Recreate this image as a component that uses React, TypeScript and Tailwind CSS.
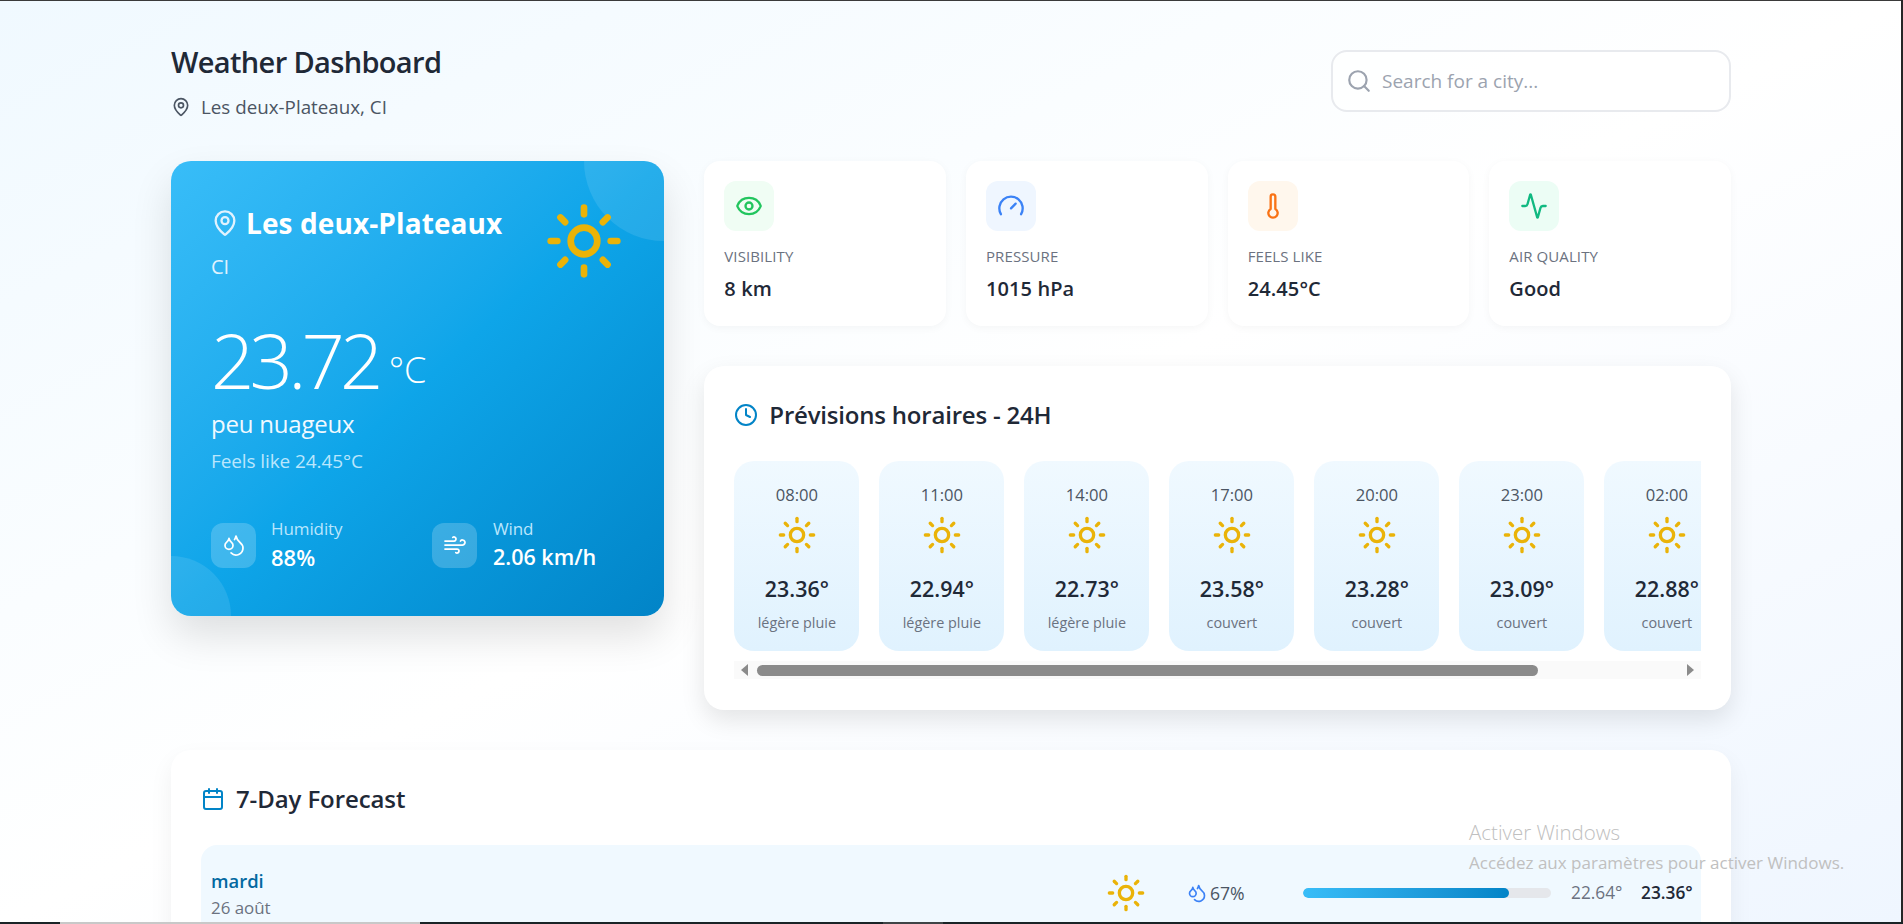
import { Sun, MapPin, Search, Eye, Gauge, Thermometer, Activity, Droplets, Wind, Clock, Calendar } from "lucide-react";

const stats = [
  { label: "Visibility", value: "8 km", Icon: Eye, box: "bg-[#f0fdf4]", color: "text-[#22c55e]" },
  { label: "Pressure", value: "1015 hPa", Icon: Gauge, box: "bg-[#eff6ff]", color: "text-[#3b82f6]" },
  { label: "Feels like", value: "24.45°C", Icon: Thermometer, box: "bg-[#fff7ed]", color: "text-[#f97316]" },
  { label: "Air quality", value: "Good", Icon: Activity, box: "bg-[#ecfdf5]", color: "text-[#10b981]" },
];

const hours = [
  { t: "08:00", v: "23.36°", d: "légère pluie" },
  { t: "11:00", v: "22.94°", d: "légère pluie" },
  { t: "14:00", v: "22.73°", d: "légère pluie" },
  { t: "17:00", v: "23.58°", d: "couvert" },
  { t: "20:00", v: "23.28°", d: "couvert" },
  { t: "23:00", v: "23.09°", d: "couvert" },
  { t: "02:00", v: "22.88°", d: "couvert" },
];

export default function App() {
  return (
    <div className="relative h-[924px] overflow-hidden bg-gradient-to-br from-[#f0f9ff] via-white to-[#eff6ff] font-['Open_Sans',sans-serif] text-[#1f2937]">
      <div className="ml-[171px] w-[1560px]">
        <header className="flex justify-between pt-[44px]">
          <div>
            <h1 className="text-[29px] leading-[36px] font-semibold tracking-[-0.65px]">Weather Dashboard</h1>
            <div className="mt-[15px] flex items-center gap-[10px] text-[18.8px] leading-6 text-[#4b5563]">
              <MapPin size={20} strokeWidth={2} />
              <span>Les deux-Plateaux, CI</span>
            </div>
          </div>
          <div className="mt-[6px] flex h-[62px] w-[400px] items-center gap-[10px] rounded-2xl border-2 border-[#e8eaee] bg-white/80 pl-[13px] text-[19px] text-[#9ca3af]">
            <Search size={26} strokeWidth={2} />
            <span>Search for a city...</span>
          </div>
        </header>

        <div className="mt-[42px] grid grid-cols-3 gap-x-10">
          <section className="relative h-[455px] overflow-hidden rounded-[20px] bg-gradient-to-br from-[#38bdf8] via-[#0ea5e9] to-[#0284c7] p-10 text-white shadow-[0_20px_40px_rgba(0,0,0,0.12)]">
            <div className="absolute -top-20 -right-20 size-40 rounded-full bg-white/10" />
            <div className="absolute -bottom-[60px] -left-[60px] size-[120px] rounded-full bg-white/10" />
            <div className="relative flex justify-between">
              <div>
                <div className="flex h-[44px] items-center gap-[7px]">
                  <MapPin size={28} strokeWidth={2} className="text-[#e0f2fe]" />
                  <span className="text-[28px] font-bold tracking-[0.1px]">Les deux-Plateaux</span>
                </div>
                <div className="mt-[10px] text-[20px] leading-6 text-[#e0f2fe]">CI</div>
              </div>
              <Sun size={80} strokeWidth={2} className="text-[#eab308]" />
            </div>
            <div className="relative mt-[34px] flex items-start">
              <span className="text-[76px] leading-[90px] font-light tracking-[-4.8px]">23.72</span>
              <span className="mt-[30px] ml-[10px] text-[36px] leading-[50px] font-light">°C</span>
            </div>
            <div className="relative mt-[3px] text-[24px] leading-8 tracking-[-0.2px] text-[#f0f9ff]">peu nuageux</div>
            <div className="relative mt-[9px] text-[19px] leading-6 tracking-[-0.1px] text-[#bae6fd]">Feels like 24.45°C</div>
            <div className="relative mt-[44px] grid grid-cols-[221px_1fr]">
              <div className="flex items-center gap-[15px]">
                <div className="flex size-[45px] items-center justify-center rounded-xl bg-white/20">
                  <Droplets size={24} strokeWidth={1.75} />
                </div>
                <div>
                  <div className="text-[17px] leading-[24px] tracking-[-0.1px] text-[#bae6fd]">Humidity</div>
                  <div className="text-[22px] leading-[32px] font-semibold">88%</div>
                </div>
              </div>
              <div className="flex items-center gap-[16px]">
                <div className="flex size-[45px] items-center justify-center rounded-xl bg-white/20">
                  <Wind size={24} strokeWidth={1.75} />
                </div>
                <div>
                  <div className="text-[17px] leading-[24px] tracking-[-0.1px] text-[#bae6fd]">Wind</div>
                  <div className="text-[21.5px] leading-[32px] font-semibold">2.06 km/h</div>
                </div>
              </div>
            </div>
          </section>

          <div className="col-span-2">
            <div className="grid grid-cols-4 gap-5">
              {stats.map(({ label, value, Icon, box, color }) => (
                <div key={label} className="h-[165px] rounded-2xl bg-white p-5 shadow-[0_2px_8px_rgba(0,0,0,0.04)]">
                  <div className={`flex size-[50px] items-center justify-center rounded-xl ${box} ${color}`}>
                    <Icon size={28} strokeWidth={2} />
                  </div>
                  <div className="mt-[15px] text-[15px] leading-5 tracking-[0.1px] text-[#6b7280] uppercase">{label}</div>
                  <div className="mt-[8px] text-[20px] leading-[30px] font-semibold tracking-[0.1px]">{value}</div>
                </div>
              ))}
            </div>

            <section className="mt-10 h-[344px] rounded-[20px] bg-white p-[30px] shadow-[0_10px_25px_rgba(0,0,0,0.1)]">
              <div className="flex h-[38px] items-center gap-[11px]">
                <Clock size={24} strokeWidth={2} className="text-[#0284c7]" />
                <h2 className="text-[24px] font-semibold tracking-[-0.2px]">Prévisions horaires - 24H</h2>
              </div>
              <div className="mt-[27px] flex gap-5 overflow-hidden">
                {hours.map((h) => (
                  <div key={h.t} className="flex h-[190px] w-[125px] shrink-0 flex-col items-center rounded-[20px] bg-gradient-to-b from-[#f0f9ff] to-[#e0f2fe] pt-[22px]">
                    <div className="text-[16.6px] leading-6 font-medium text-[#4b5563]">{h.t}</div>
                    <Sun size={40} strokeWidth={2} className="mt-[8px] text-[#eab308]" />
                    <div className="mt-[19px] text-[21.4px] leading-[30px] font-semibold">{h.v}</div>
                    <div className="mt-[9px] text-[14.4px] leading-5 text-[#6b7280]">{h.d}</div>
                  </div>
                ))}
              </div>
              <div className="mt-[10px] flex h-[18px] items-center bg-[#fafafa] pr-[7px] pl-[7px]">
                <span className="h-0 w-0 border-y-[6px] border-r-[7px] border-y-transparent border-r-[#8b8b8b]" />
                <span className="ml-[9px] h-[11px] w-[781px] rounded-full bg-[#8b8b8b]" />
                <span className="ml-auto h-0 w-0 border-y-[6px] border-l-[7px] border-y-transparent border-l-[#8b8b8b]" />
              </div>
            </section>
          </div>
        </div>

        <section className="mt-10 rounded-[20px] bg-white p-[30px] shadow-[0_10px_25px_rgba(0,0,0,0.06)]">
          <div className="flex h-[38px] items-center gap-[11px]">
            <Calendar size={24} strokeWidth={2} className="text-[#0284c7]" />
            <h2 className="text-[24px] font-semibold tracking-[-0.1px]">7-Day Forecast</h2>
          </div>
          <div className="mt-[27px] flex h-[96px] items-center rounded-2xl bg-[#f0f9ff] px-[10px]">
            <div className="flex-1 pt-[2px]">
              <div className="text-[18.4px] leading-6 font-semibold text-[#0369a1]">mardi</div>
              <div className="mt-[3px] text-[16.9px] leading-6 text-[#6b7280]">26 août</div>
            </div>
            <Sun size={40} strokeWidth={2} className="text-[#eab308]" />
            <div className="ml-[41px] flex w-[116px] items-center gap-[3px] text-[17.6px] text-[#4b5563]">
              <Droplets size={20} strokeWidth={2} className="text-[#3b82f6]" />
              <span>67%</span>
            </div>
            <div className="h-[10px] w-[248px] overflow-hidden rounded-full bg-[#e5e7eb]">
              <div className="h-full rounded-full bg-gradient-to-r from-[#38bdf8] to-[#0284c7]" style={{ width: "83%" }} />
            </div>
            <div className="ml-5 w-[50px] text-right text-[17.3px] font-medium whitespace-nowrap text-[#6b7280]">22.64°</div>
            <div className="ml-5 w-[50px] text-right text-[17.3px] font-semibold whitespace-nowrap">23.36°</div>
          </div>
        </section>
      </div>

      <div className="absolute top-[816px] left-[1469px] text-[#c0c0c0]">
        <div className="text-[20.5px] leading-8 font-light">Activer Windows</div>
        <div className="mt-[5px] text-[17px] leading-5 whitespace-nowrap">Accédez aux paramètres pour activer Windows.</div>
      </div>

      <div className="absolute inset-x-0 top-0 h-px bg-[#3a3a3a]" />
      <div className="absolute inset-y-0 right-0 w-[2px] bg-[#262626]" />
      <div className="absolute inset-x-0 bottom-0 flex h-[2px] bg-[#1a2326]">
        <div className="ml-[60px] w-[360px] bg-[#c8c8c8]" />
        <div className="ml-[463px] w-[60px] bg-[#3f4446]" />
      </div>
    </div>
  );
}
